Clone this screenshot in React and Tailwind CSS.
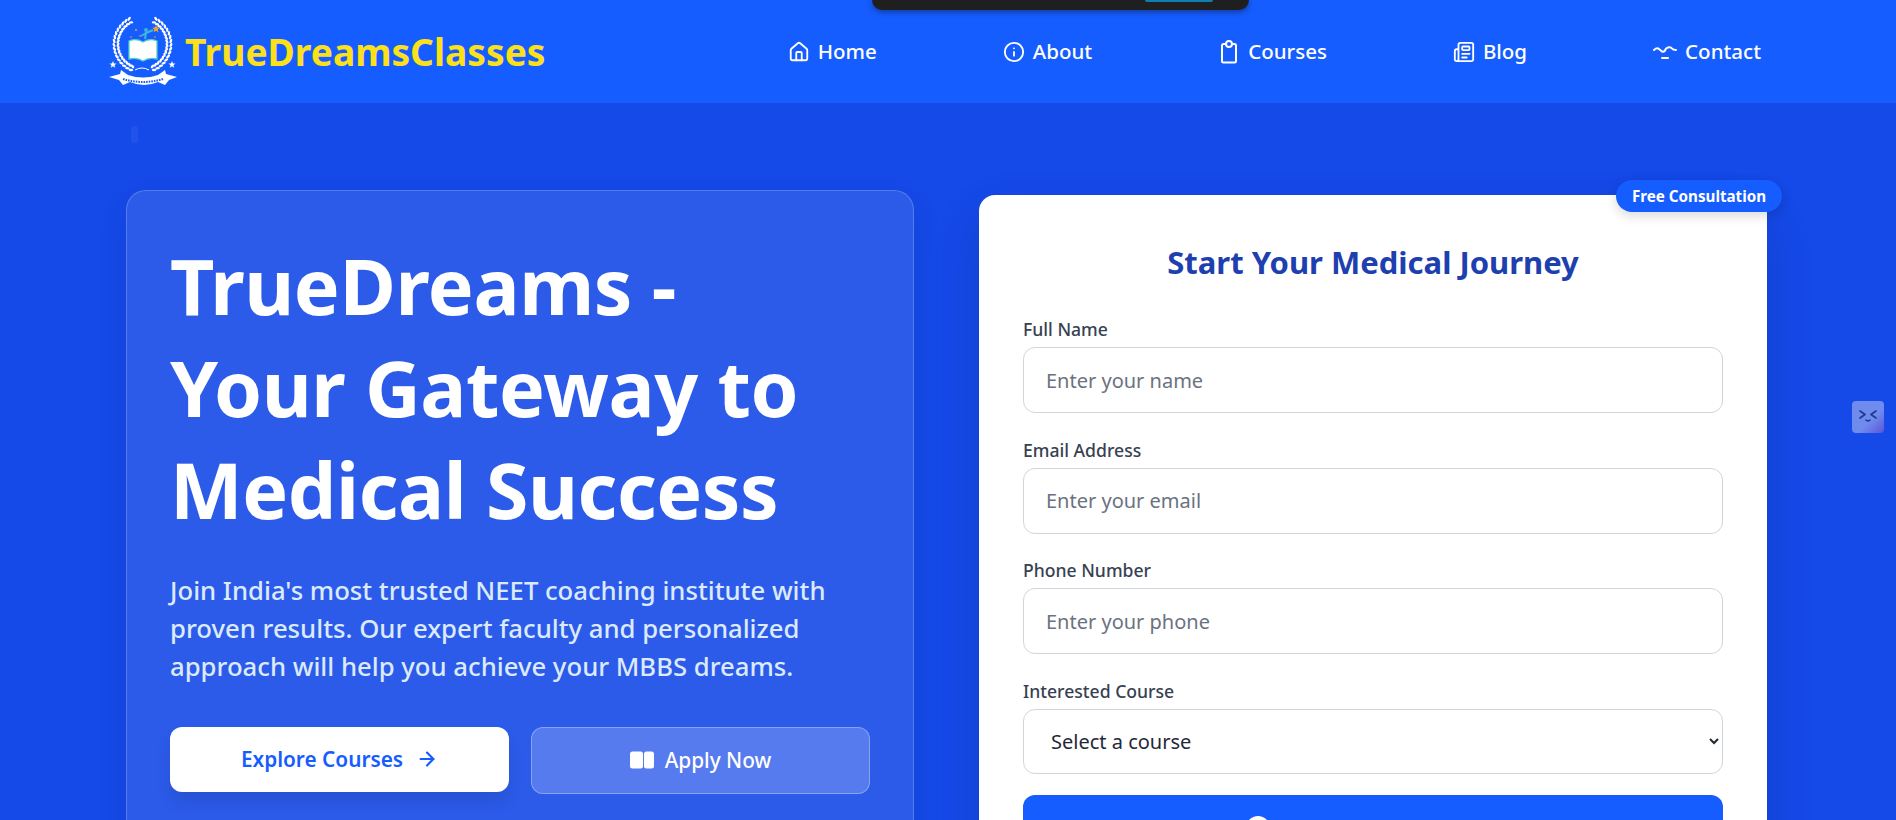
import React from "react";
import { Home, Info, Newspaper, ArrowRight } from "lucide-react";

function Logo() {
  const angles = [];
  for (let d = -62; d <= 70; d += 8) angles.push(d);
  return (
    <svg width="68" height="72" viewBox="0 0 68 72" className="shrink-0">
      {angles.map(d => {
        const t = (d * Math.PI) / 180;
        return [1, -1].map(s =>
          [24.5, 28.5].map(r => {
            const x = 33.5 + s * r * Math.cos(t);
            const y = 29 + r * Math.sin(t);
            return (
              <ellipse
                key={d + "/" + s + "/" + r}
                cx={x}
                cy={y}
                rx="2.3"
                ry="1.2"
                fill="#fff"
                transform={`rotate(${s * (d + 90 + (r > 26 ? 25 : -25))} ${x} ${y})`}
              />
            );
          })
        );
      })}
      <path d="M20 26 q7 -3 14 1 q7 -4 14 -1 v18 q-8 -2 -14 2 q-6 -4 -14 -2z" fill="#fff" stroke="#4fd1c5" strokeWidth="1.3" />
      <circle cx="37" cy="15" r="1.9" fill="#3fb6d8" />
      <path d="M37 17 l-1 7 M37 18 l7 -3 M37 18 l-5 3" stroke="#3fb6d8" strokeWidth="2" fill="none" />
      <path d="M47 10 l1 2.6 2.7 .2 -2 1.7 .7 2.7 -2.4 -1.5 -2.4 1.5 .7 -2.7 -2 -1.7 2.7 -.2z" fill="#f5a623" />
      <circle cx="27" cy="15" r=".9" fill="#f5a623" />
      <circle cx="31" cy="21" r=".8" fill="#f5a623" />
      <circle cx="22" cy="22" r=".8" fill="#f5a623" />
      <circle cx="46" cy="22" r=".8" fill="#f5a623" />
      <path d="M4 46 l1 2.4 2.5 .2 -2 1.6 .7 2.5 -2.2 -1.4 -2.2 1.4 .7 -2.5 -2 -1.6 2.5 -.2z M63 46 l1 2.4 2.5 .2 -2 1.6 .7 2.5 -2.2 -1.4 -2.2 1.4 .7 -2.5 -2 -1.6 2.5 -.2z" fill="#fff" />
      <path d="M0 62 l11 -3 1 -4 7 5 q15 5 30 0 l7 -5 1 4 11 3 -8 3 -4 5 -7 -3 q-14 6 -28 0 l-7 3 -4 -5z" fill="#fff" />
      <path d="M14 64 q20 6 40 0" stroke="#165dff" strokeWidth="2" strokeDasharray="1.6 1" fill="none" />
      <path d="M26 55 q7 -4 14 0" stroke="#fff" strokeWidth="1" fill="none" />
    </svg>
  );
}

function ContactIcon() {
  return (
    <svg width="24" height="24" viewBox="0 0 24 24" fill="none" stroke="#fff" strokeWidth="2" strokeLinecap="round" strokeLinejoin="round" className="shrink-0">
      <path d="M1 10 q3 -3 5 -1 l3 2.5 q1.500 .8 3 -1 l1 -2 q4 -2.500 6 0 q1 1.500 4 1.500" />
      <path d="M9 18 h6" />
    </svg>
  );
}

function TagClipboard() {
  return (
    <svg width="22" height="24" viewBox="0 0 22 24" fill="none" stroke="#fff" strokeWidth="2" strokeLinecap="round" strokeLinejoin="round" className="shrink-0">
      <path d="M8 4 H5.500 a1.500 1.500 0 0 0 -1.500 1.500 V21 a1.500 1.500 0 0 0 1.500 1.500 H16.500 a1.500 1.500 0 0 0 1.500 -1.500 V5.500 a1.500 1.500 0 0 0 -1.500 -1.500 H14" />
      <circle cx="11" cy="4" r="3" />
    </svg>
  );
}

function NavItem({ icon, label }) {
  return (
    <a className="flex items-center gap-[8px] text-white text-[20.5px] font-medium">
      {icon}
      <span>{label}</span>
    </a>
  );
}

function Field({ label, placeholder }) {
  return (
    <div>
      <label className="block text-[#374151] text-[17.6px] font-medium leading-[26px] mb-[5px]">{label}</label>
      <input
        placeholder={placeholder}
        className="w-full h-[66px] rounded-[12px] border border-[#d1d5db] bg-white px-[22px] text-[20px] placeholder:text-[#6b7280] outline-none"
      />
    </div>
  );
}

export default function App() {
  return (
    <div
      className="h-[820px] w-full overflow-hidden relative bg-[#1549e8]"
      style={{ fontFamily: '"Noto Sans", "Open Sans", sans-serif' }}
    >
      <header className="h-[103px] bg-[#165dff] flex items-center">
        <div className="flex items-center pl-[109px] pb-[1px]">
          <Logo />
          <span className="ml-[8px] text-[#fde01c] text-[37.2px] font-bold leading-none mt-[2px]">TrueDreamsClasses</span>
        </div>
        <nav className="ml-auto pr-[135px] flex items-center gap-[126px]">
          <NavItem icon={<Home size={22} strokeWidth={2} />} label="Home" />
          <NavItem icon={<Info size={22} strokeWidth={2} />} label="About" />
          <NavItem icon={<TagClipboard />} label="Courses" />
          <NavItem icon={<Newspaper size={22} strokeWidth={2} />} label="Blog" />
          <NavItem icon={<ContactIcon />} label="Contact" />
        </nav>
      </header>

      <div className="absolute left-[872px] top-0 w-[377px] h-[10px] bg-[#1f1f1f] rounded-b-[12px] shadow-[0_2px_6px_rgba(0,0,0,0.4)]">
        <div className="absolute left-[273px] top-0 w-[68px] h-[2px] bg-[#0e7fb0] rounded-b-[6px]" />
      </div>
      <div className="absolute left-[131px] top-[126px] w-[7px] h-[17px] rounded-[3px] bg-white/5" />

      <main className="flex items-start pl-[126px] pr-[129px] pt-[87px] gap-[65px]">
        <section className="w-[788px] shrink-0 h-[700px] rounded-[20px] border border-white/20 bg-white/10 shadow-[0_10px_30px_rgba(0,0,0,0.08)] px-[43px] pt-[44px]">
          <h1 className="text-white text-[77px] font-bold leading-[102px] tracking-[-0.4px]">
            TrueDreams -<br />Your Gateway to<br />Medical Success
          </h1>
          <p className="mt-[31px] text-[#dbeafe] text-[25.7px] leading-[38.2px] font-medium">
            Join India's most trusted NEET coaching institute with<br />proven results. Our expert faculty and personalized<br />approach will help you achieve your MBBS dreams.
          </p>
          <div className="mt-[40px] flex gap-[22px] items-start">
            <button className="w-[339px] h-[65px] rounded-[12px] bg-white text-[#165dff] text-[20.8px] font-semibold flex items-center justify-center gap-[13px] shadow-[0_10px_15px_rgba(0,0,0,0.1)]">
              Explore Courses <ArrowRight size={22} strokeWidth={2.4} />
            </button>
            <button className="w-[339px] h-[67px] rounded-[12px] border border-white/30 bg-white/20 text-white text-[20.8px] font-medium flex items-center justify-center gap-[11px]">
              <svg width="24" height="18" viewBox="0 0 24 18" fill="#fff"><rect x="0" y="0.500" width="13" height="17" rx="2.500" /><rect x="14" y="0.500" width="10" height="17" rx="2.500" /></svg>
              Apply Now
            </button>
          </div>
        </section>

        <section className="relative w-[788px] shrink-0 h-[700px] mt-[5px] rounded-[16px] bg-white shadow-[0_20px_50px_rgba(0,0,0,0.12)] px-[44px] pt-[46px]">
          <div className="absolute -right-[15px] -top-[15px] h-[32px] w-[166px] rounded-full bg-[#165dff] text-white text-[15.2px] font-bold flex items-center justify-center shadow-[0_4px_12px_rgba(0,0,0,0.15)]">
            Free Consultation
          </div>
          <h2 className="text-center text-[#1e40af] text-[31px] font-bold leading-[42px]">Start Your Medical Journey</h2>
          <div className="mt-[33px] flex flex-col gap-[23.5px]">
            <Field label="Full Name" placeholder="Enter your name" />
            <Field label="Email Address" placeholder="Enter your email" />
            <Field label="Phone Number" placeholder="Enter your phone" />
            <div>
              <label className="block text-[#374151] text-[17.6px] font-medium leading-[26px] mb-[5px]">Interested Course</label>
              <select className="w-full h-[65px] rounded-[12px] border border-[#d1d5db] bg-white pl-[23px] pr-[8px] text-[20px] text-[#1f2937] outline-none">
                <option>Select a course</option>
              </select>
            </div>
            <button className="-mt-[2.5px] w-full h-[66px] rounded-[12px] bg-[#165dff] text-white text-[20.5px] font-semibold flex items-center justify-center gap-[12px]">
              <svg width="24" height="24" viewBox="0 0 24 24" fill="#fff"><circle cx="12" cy="12" r="12" /></svg>
              Get Free Consultation
            </button>
          </div>
        </section>
      </main>

      <div className="absolute left-[1852px] top-[401px] w-[32px] h-[32px] rounded-[4px] bg-[linear-gradient(135deg,#6f8bee_60%,#5a55d8)] flex items-center justify-center">
        <svg width="20" height="14" viewBox="0 0 20 14" fill="none" stroke="#1e3a8a" strokeWidth="1.600" strokeLinecap="round" strokeLinejoin="round">
          <path d="M2 1 L7 4.500 L2 8 M18 1 L13 4.500 L18 8 M8 10 q2 2 4 0" />
        </svg>
      </div>
    </div>
  );
}
